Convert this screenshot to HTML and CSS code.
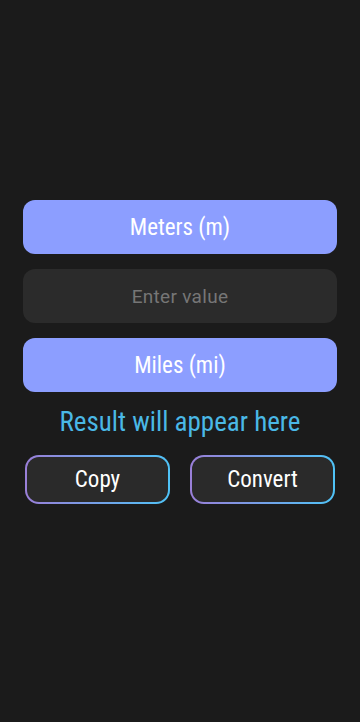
FILE: index.html
```html
<!DOCTYPE html>
<html>
<head>
<meta charset="utf-8">
<link rel="stylesheet" href="styles.css">
</head>
<body>
<div class="app">
  <div class="unit">Meters (m)</div>
  <div class="input">Enter value</div>
  <div class="unit">Miles (mi)</div>
  <div class="result">Result will appear here</div>
  <div class="actions">
    <div class="btn"><span>Copy</span></div>
    <div class="btn"><span>Convert</span></div>
  </div>
</div>
</body>
</html>
```
FILE: styles.css
```css
html, body {
  margin: 0;
  padding: 0;
  background: #1b1b1b;
  height: 100%;
}
body {
  font-family: "Roboto Condensed", Roboto, "Liberation Sans", sans-serif;
}
.app {
  padding: 200px 23px 0;
  display: flex;
  flex-direction: column;
}
.unit {
  height: 54px;
  border-radius: 12px;
  background: #8c9eff;
  color: #ffffff;
  font-size: 23px;
  display: flex;
  align-items: center;
  justify-content: center;
}
.input {
  margin: 15px 0;
  height: 54px;
  border-radius: 12px;
  background: #2b2b2b;
  color: #767676;
  font-family: Roboto, "Liberation Sans", sans-serif;
  font-size: 19px;
  letter-spacing: 0.3px;
  display: flex;
  align-items: center;
  justify-content: center;
}
.result {
  margin-top: 11px;
  height: 38px;
  color: #4ab8e6;
  font-size: 27px;
  display: flex;
  align-items: center;
  justify-content: center;
}
.actions {
  margin-top: 14px;
  padding: 0 2px;
  display: flex;
  gap: 20px;
}
.btn {
  flex: 1;
  height: 49px;
  border-radius: 14px;
  padding: 2px;
  box-sizing: border-box;
  background: linear-gradient(90deg, #9a7fd8, #4fc3f7);
}
.btn span {
  display: flex;
  height: 100%;
  align-items: center;
  justify-content: center;
  border-radius: 12px;
  background: #2a2a2a;
  color: #ffffff;
  font-size: 23px;
}
```
